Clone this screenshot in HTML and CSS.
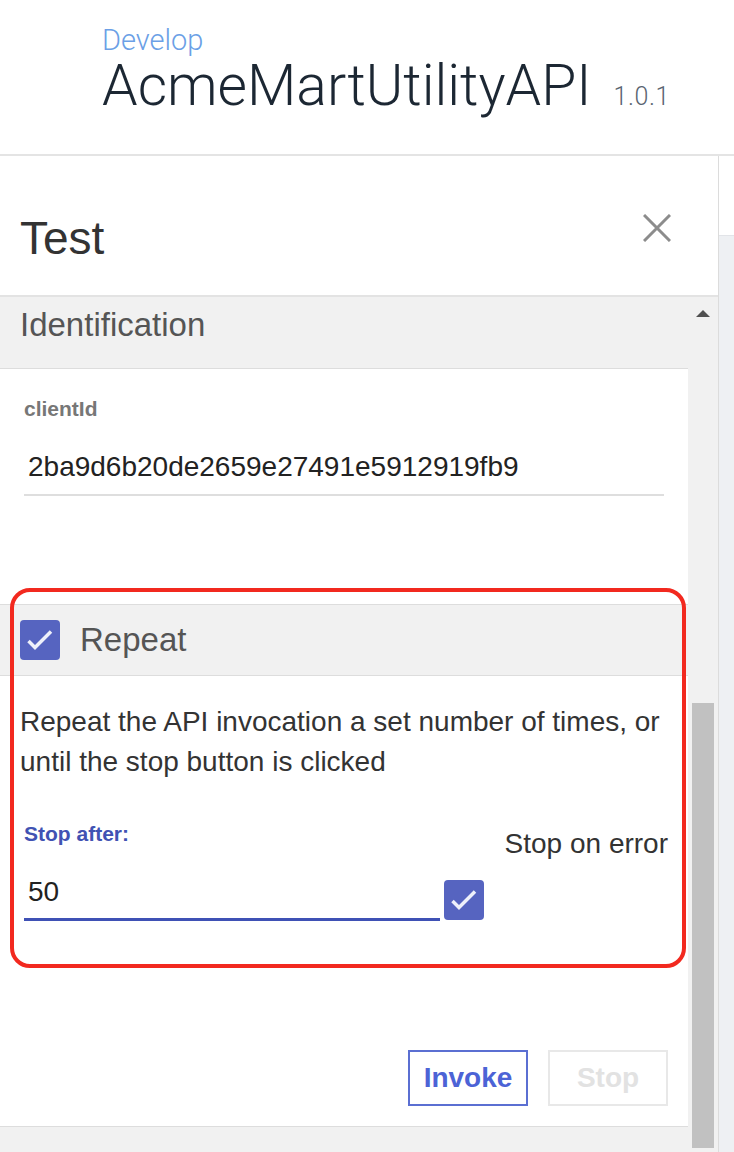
FILE: index.html
```html
<!DOCTYPE html>
<html lang="en">
<head>
<meta charset="utf-8">
<title>AcmeMartUtilityAPI – Test</title>
<link rel="stylesheet" href="styles.css">
</head>
<body>
<header class="app-header">
  <div class="crumb">Develop</div>
  <div class="title-row">
    <h1 class="api-title">AcmeMartUtilityAPI</h1>
    <span class="version">1.0.1</span>
  </div>
</header>
<div class="main">
  <section class="test-panel">
    <div class="panel-head">
      <h2 class="panel-title">Test</h2>
      <button class="close-btn" aria-label="Close">
        <svg width="28" height="28" viewBox="0 0 28 28"><path d="M1 1 L27 27 M27 1 L1 27" stroke="#8c8c8c" stroke-width="3" fill="none"/></svg>
      </button>
    </div>
    <div class="panel-scroll">
      <div class="scroll-content">
        <div class="section-head">Identification</div>
        <div class="section-body ident-body">
          <div class="field-label">clientId</div>
          <div class="field-value">2ba9d6b20de2659e27491e5912919fb9</div>
        </div>
        <div class="section-head repeat-head">
          <span class="checkbox">
            <svg width="40" height="40" viewBox="0 0 40 40"><path d="M8.5 21 L15 27.5 L31 11.5" stroke="#eef0fa" stroke-width="3.5" fill="none"/></svg>
          </span>
          <span>Repeat</span>
        </div>
        <div class="section-body repeat-body">
          <p class="repeat-desc">Repeat the API invocation a set number of times, or until the stop button is clicked</p>
          <div class="repeat-options">
            <div class="stop-field">
              <div class="stop-label">Stop after:</div>
              <div class="stop-input">50</div>
            </div>
            <span class="checkbox small-check">
              <svg width="40" height="40" viewBox="0 0 40 40"><path d="M8.5 21 L15 27.5 L31 11.5" stroke="#eef0fa" stroke-width="3.5" fill="none"/></svg>
            </span>
            <span class="stop-error">Stop on error</span>
          </div>
          <div class="actions">
            <button class="btn btn-invoke">Invoke</button>
            <button class="btn btn-stop" disabled>Stop</button>
          </div>
        </div>
        <div class="footer-fill"></div>
        <div class="highlight"></div>
      </div>
      <div class="scrollbar">
        <span class="arrow-up"></span>
        <div class="thumb"></div>
      </div>
    </div>
  </section>
  <aside class="side">
    <div class="side-top"></div>
  </aside>
</div>
</body>
</html>
```

FILE: styles.css
```css
html, body {
  margin: 0;
  padding: 0;
  width: 734px;
  height: 1152px;
  overflow: hidden;
  background: #ffffff;
  font-family: "Liberation Sans", Arial, sans-serif;
}

.app-header {
  box-sizing: border-box;
  height: 156px;
  padding: 24px 0 0 102px;
  border-bottom: 2px solid #e4e4e4;
  font-family: Roboto, "Liberation Sans", sans-serif;
}

.crumb {
  font-size: 29px;
  line-height: 32px;
  font-weight: 300;
  color: #6b9fe6;
}

.title-row {
  display: flex;
  align-items: baseline;
  margin-top: 6px;
}

.api-title {
  margin: 0;
  font-size: 57px;
  line-height: 48px;
  font-weight: 300;
  color: #1c2733;
}

.version {
  margin-left: 22px;
  font-size: 25px;
  line-height: 30px;
  letter-spacing: 0.6px;
  font-weight: 300;
  color: #5a6470;
}

.main {
  display: flex;
  height: 996px;
}

.test-panel {
  width: 718px;
  display: flex;
  flex-direction: column;
}

.panel-head {
  box-sizing: border-box;
  height: 141px;
  display: flex;
  justify-content: space-between;
  align-items: flex-start;
  padding: 0 47px 0 20px;
  border-bottom: 2px solid #e3e3e3;
}

.panel-title {
  margin: 54px 0 0;
  font-size: 46px;
  line-height: 56px;
  font-weight: 400;
  color: #333333;
}

.close-btn {
  margin-top: 58px;
  padding: 0;
  border: 0;
  background: none;
  width: 28px;
  height: 28px;
}

.close-btn svg { display: block; }

.panel-scroll {
  flex: 1;
  display: flex;
  background: #f1f1f1;
}

.scroll-content {
  position: relative;
  width: 688px;
  display: flex;
  flex-direction: column;
}

.section-head {
  box-sizing: border-box;
  height: 71px;
  padding: 8px 0 0 20px;
  font-size: 33px;
  line-height: 40px;
  color: #555555;
}

.section-body {
  background: #ffffff;
  border-top: 1px solid #dddddd;
}

.ident-body {
  box-sizing: border-box;
  height: 236px;
  padding: 28px 24px 0;
}

.field-label {
  font-size: 21px;
  line-height: 24px;
  font-weight: 700;
  color: #777777;
}

.field-value {
  margin-top: 26px;
  padding: 0 0 7px 4px;
  font-size: 28px;
  line-height: 40px;
  color: #222222;
  border-bottom: 2px solid #dedede;
}

.repeat-head {
  display: flex;
  align-items: center;
  gap: 20px;
  padding: 0 0 0 20px;
  border-top: 1px solid #dddddd;
}

.checkbox {
  display: block;
  width: 40px;
  height: 40px;
  border-radius: 4px;
  background: #5664c0;
  flex: none;
}

.checkbox svg { display: block; }

.repeat-body {
  padding: 26px 20px 20px;
  border-bottom: 1px solid #dddddd;
}

.repeat-desc {
  margin: 0;
  font-size: 28px;
  line-height: 40px;
  color: #333333;
}

.repeat-options {
  display: flex;
  align-items: flex-start;
  margin-top: 40px;
}

.stop-field {
  width: 416px;
  margin-left: 4px;
}

.stop-label {
  font-size: 21px;
  line-height: 24px;
  font-weight: 700;
  color: #4152b3;
}

.stop-input {
  margin-top: 26px;
  padding: 0 0 6px 4px;
  font-size: 28px;
  line-height: 40px;
  color: #222222;
  border-bottom: 3px solid #3f51b5;
}

.small-check {
  margin: 58px 0 0 4px;
}

.stop-error {
  margin: 2px 0 0 auto;
  font-size: 28px;
  line-height: 40px;
  color: #333333;
}

.actions {
  display: flex;
  justify-content: flex-end;
  gap: 20px;
  margin-top: 129px;
}

.btn {
  box-sizing: border-box;
  width: 120px;
  height: 56px;
  padding: 0;
  background: #ffffff;
  font-family: "Liberation Sans", Arial, sans-serif;
  font-size: 28px;
  font-weight: 700;
}

.btn-invoke {
  border: 2px solid #5b6fd2;
  color: #4c63d6;
}

.btn-stop {
  border: 2px solid #e8e8e8;
  color: #e2e2e2;
}

.footer-fill {
  flex: 1;
}

.highlight {
  position: absolute;
  top: 291px;
  left: 10px;
  width: 676px;
  height: 380px;
  box-sizing: border-box;
  border: 4px solid #f2291f;
  border-radius: 20px;
  pointer-events: none;
}

.scrollbar {
  width: 30px;
  display: flex;
  flex-direction: column;
  background: #f1f1f1;
}

.arrow-up {
  display: block;
  width: 0;
  height: 0;
  margin: 13px 0 0 8px;
  border-left: 7px solid transparent;
  border-right: 7px solid transparent;
  border-bottom: 7px solid #505050;
}

.thumb {
  width: 22px;
  height: 445px;
  margin: 386px 0 0 4px;
  background: #c1c1c1;
}

.side {
  width: 15px;
  border-left: 1px solid #dcdcdc;
  background: #eef0f3;
}

.side-top {
  height: 79px;
  background: #ffffff;
  border-bottom: 1px solid #e2e4e8;
}
```
